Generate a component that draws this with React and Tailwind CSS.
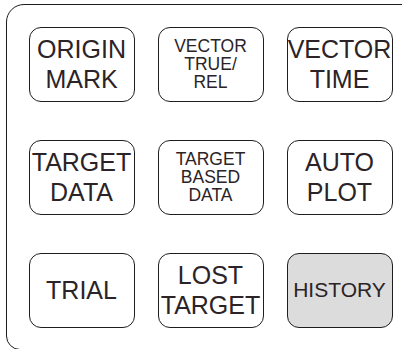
import React from 'react';

const keys = [
  { lines: ['ORIGIN', 'MARK'] },
  { lines: ['VECTOR', 'TRUE/', 'REL'], small: true },
  { lines: ['VECTOR', 'TIME'] },
  { lines: ['TARGET', 'DATA'] },
  { lines: ['TARGET', 'BASED', 'DATA'], small: true },
  { lines: ['AUTO', 'PLOT'] },
  { lines: ['TRIAL'] },
  { lines: ['LOST', 'TARGET'] },
  { lines: ['HISTORY'], active: true },
];

function Key({ lines, small, active }) {
  return (
    <button
      className={
        'h-[75px] w-[106px] rounded-[12px] border-[1.5px] border-[#1e1e1e] flex flex-col items-center justify-center text-[#2b2327] ' +
        (active ? 'bg-[#dcdcdc] text-[21px] leading-[26px]' : small ? 'bg-white text-[17.5px] leading-[18px]' : 'bg-white text-[25px] leading-[30px]')
      }
    >
      {lines.map((l, i) => (
        <span key={i} className="block whitespace-nowrap">{l}</span>
      ))}
    </button>
  );
}

export default function App() {
  return (
    <div className="h-[349px] w-[402px] overflow-hidden bg-white pt-[4px] pl-[6px] font-['Liberation_Sans',Arial,sans-serif]">
      <div className="w-[420px] h-[346px] border-[1.5px] border-[#1c1c1c] rounded-tl-[18px] rounded-bl-[14px] pt-[21.5px] pl-[21.5px]">
        <div className="grid grid-cols-[106px_106px_106px] gap-x-[23px] gap-y-[38px]">
          {keys.map((k, i) => (
            <Key key={i} {...k} />
          ))}
        </div>
      </div>
    </div>
  );
}
